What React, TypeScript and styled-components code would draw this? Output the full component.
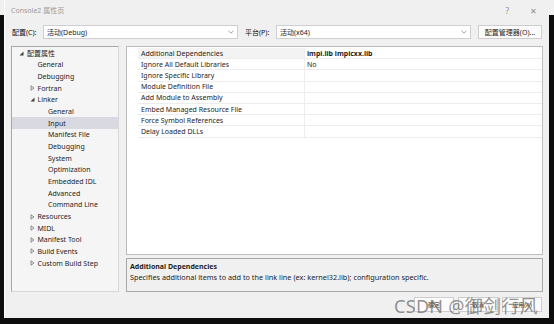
import styled, { createGlobalStyle } from "styled-components";

const GlobalStyle = createGlobalStyle`
  html, body {
    margin: 0;
    padding: 0;
  }
  body {
    width: 554px;
    height: 324px;
    overflow: hidden;
    background: linear-gradient(#f0f0f0 0 15px, #0d0d0d 15px);
    font-family: "Noto Sans", "Noto Sans CJK SC", sans-serif;
    font-size: 7px;
    color: #1e1e1e;
  }
`;

type TreeItem = {
  label: string;
  level: number;
  arrow?: "open" | "closed";
  selected?: boolean;
};

const treeItems: TreeItem[] = [
  { label: "配置属性", level: 0, arrow: "open" },
  { label: "General", level: 1 },
  { label: "Debugging", level: 1 },
  { label: "Fortran", level: 1, arrow: "closed" },
  { label: "Linker", level: 1, arrow: "open" },
  { label: "General", level: 2 },
  { label: "Input", level: 2, selected: true },
  { label: "Manifest File", level: 2 },
  { label: "Debugging", level: 2 },
  { label: "System", level: 2 },
  { label: "Optimization", level: 2 },
  { label: "Embedded IDL", level: 2 },
  { label: "Advanced", level: 2 },
  { label: "Command Line", level: 2 },
  { label: "Resources", level: 1, arrow: "closed" },
  { label: "MIDL", level: 1, arrow: "closed" },
  { label: "Manifest Tool", level: 1, arrow: "closed" },
  { label: "Build Events", level: 1, arrow: "closed" },
  { label: "Custom Build Step", level: 1, arrow: "closed" },
];

const properties: [string, string][] = [
  ["Additional Dependencies", "impi.lib impicxx.lib"],
  ["Ignore All Default Libraries", "No"],
  ["Ignore Specific Library", ""],
  ["Module Definition File", ""],
  ["Add Module to Assembly", ""],
  ["Embed Managed Resource File", ""],
  ["Force Symbol References", ""],
  ["Delay Loaded DLLs", ""],
];

function Chevron() {
  return (
    <svg width="6" height="4" viewBox="0 0 6 4">
      <path d="M0.5 0.8 L3 3.2 L5.5 0.8" fill="none" stroke="#8a8a8a" strokeWidth="0.8" />
    </svg>
  );
}

function Arrow({ kind }: { kind: "open" | "closed" }) {
  if (kind === "open") {
    return (
      <svg width="5" height="5" viewBox="0 0 5 5">
        <path d="M4.5 0.5 L4.5 4.5 L0.5 4.5 Z" fill="#404040" />
      </svg>
    );
  }
  return (
    <svg width="5" height="6" viewBox="0 0 5 6">
      <path d="M1 0.8 L4 3 L1 5.2 Z" fill="none" stroke="#707070" strokeWidth="0.8" />
    </svg>
  );
}

export default function App() {
  return (
    <>
      <GlobalStyle />
      <Dialog>
        <TitleBar>
          <Title>Console2 属性页</Title>
          <TitleButtons>
            <TitleBtn>?</TitleBtn>
            <TitleBtn>✕</TitleBtn>
          </TitleButtons>
        </TitleBar>

        <ConfigRow>
          <Label>配置(C):</Label>
          <Combo $width={195}>
            <span>活动(Debug)</span>
            <Chevron />
          </Combo>
          <Label>平台(P):</Label>
          <Combo $width={195}>
            <span>活动(x64)</span>
            <Chevron />
          </Combo>
          <ManagerButton>配置管理器(O)...</ManagerButton>
        </ConfigRow>

        <Main>
          <Tree>
            {treeItems.map((item, i) => (
              <TreeRow key={i} $level={item.level} $selected={item.selected}>
                <ArrowSlot>{item.arrow && <Arrow kind={item.arrow} />}</ArrowSlot>
                {item.label}
              </TreeRow>
            ))}
          </Tree>

          <RightColumn>
            <Grid>
              {properties.map(([name, value], i) => (
                <GridRow key={name}>
                  <NameCell $active={i === 0}>{name}</NameCell>
                  <ValueCell $bold={i === 0}>{value}</ValueCell>
                </GridRow>
              ))}
            </Grid>
            <Description>
              <DescTitle>Additional Dependencies</DescTitle>
              <div>
                Specifies additional items to add to the link line (ex: kernel32.lib); configuration
                specific.
              </div>
            </Description>
          </RightColumn>
        </Main>

        <Footer>
          <Button>确定</Button>
          <Button>取消</Button>
          <Button>应用(A)</Button>
          <Watermark>CSDN @御剑行风</Watermark>
        </Footer>
      </Dialog>
    </>
  );
}

// Styles
const Dialog = styled.div`
  position: relative;
  width: 544px;
  height: 318px;
  margin-left: 4px;
  border-left: 1px solid #fbfbfb;
  background: #f0f0f0;
  display: flex;
  flex-direction: column;
`;

const TitleBar = styled.div`
  height: 20px;
  display: flex;
  align-items: center;
  justify-content: space-between;
  padding: 0 12px 2px 6px;
`;

const Title = styled.div`
  color: #9a9a9a;
  font-size: 7px;
`;

const TitleButtons = styled.div`
  display: flex;
  gap: 21px;
`;

const TitleBtn = styled.span`
  color: #8c8c8c;
  font-size: 8px;
`;

const ConfigRow = styled.div`
  height: 15px;
  margin-top: 2px;
  display: flex;
  align-items: center;
  padding-left: 7px;
`;

const Label = styled.span`
  width: 31px;
  font-size: 7px;
  color: #111;
  &:nth-of-type(2) {
    margin-left: 7px;
  }
`;

const Combo = styled.div<{ $width: number }>`
  width: ${(p) => p.$width}px;
  height: 14px;
  box-sizing: border-box;
  border: 1px solid #cfcfcf;
  background: #fff;
  display: flex;
  align-items: center;
  justify-content: space-between;
  padding: 0 3px 0 3px;
  font-size: 7px;
`;

const ManagerButton = styled.div`
  width: 64px;
  height: 14px;
  margin-left: 7px;
  box-sizing: border-box;
  border: 1px solid #cdcdcd;
  background: #fbfbfb;
  display: flex;
  align-items: center;
  justify-content: center;
  font-size: 7px;
`;

const Main = styled.div`
  margin-top: 7px;
  height: 246px;
  display: flex;
  gap: 7px;
  padding-left: 6px;
`;

const Tree = styled.div`
  width: 108px;
  box-sizing: border-box;
  border: 1px solid #a9a9a9;
  border-right-color: #d8d8d8;
  border-bottom-color: #d8d8d8;
  background: #f5f5f5;
  padding-top: 0.5px;
  display: flex;
  flex-direction: column;
`;

const TreeRow = styled.div<{ $level: number; $selected?: boolean }>`
  height: 11.67px;
  display: flex;
  align-items: center;
  padding-left: ${(p) => 5 + p.$level * 10.5}px;
  background: ${(p) => (p.$selected ? "#d9d9e2" : "transparent")};
  font-size: 7px;
  color: #1e1e1e;
  white-space: nowrap;
`;

const ArrowSlot = styled.span`
  width: 10px;
  display: inline-flex;
  align-items: center;
  justify-content: flex-start;
  padding-left: 2px;
  box-sizing: border-box;
`;

const RightColumn = styled.div`
  width: 417px;
  display: flex;
  flex-direction: column;
  gap: 3px;
`;

const Grid = styled.div`
  height: 209px;
  box-sizing: border-box;
  border: 1px solid #bdbdbd;
  background: #fff;
  padding: 1px 0 0 11px;
`;

const GridRow = styled.div`
  height: 11.2px;
  display: grid;
  grid-template-columns: 167px 1fr;
  border-bottom: 1px solid #ededed;
  box-sizing: border-box;
`;

const NameCell = styled.div<{ $active?: boolean }>`
  padding-left: 3px;
  display: flex;
  align-items: center;
  background: ${(p) => (p.$active ? "#f3f3f3" : "#fff")};
  border-right: 1px solid #ededed;
  font-size: 7px;
  white-space: nowrap;
`;

const ValueCell = styled.div<{ $bold?: boolean }>`
  padding-left: 2px;
  display: flex;
  align-items: center;
  font-size: 7px;
  font-weight: ${(p) => (p.$bold ? 700 : 400)};
`;

const Description = styled.div`
  height: 34px;
  box-sizing: border-box;
  border: 1px solid #a8a8a8;
  background: #f0f0f0;
  padding: 2px 3px;
  font-size: 7.3px;
  line-height: 11px;
`;

const DescTitle = styled.div`
  font-weight: 700;
  font-size: 7px;
`;

const Footer = styled.div`
  position: relative;
  margin-top: 5px;
  height: 15px;
  display: flex;
  justify-content: flex-end;
  gap: 4px;
  padding-right: 7px;
`;

const Button = styled.div`
  width: 40px;
  box-sizing: border-box;
  border: 1px solid #cdcdcd;
  background: #fbfbfb;
  display: flex;
  align-items: center;
  justify-content: center;
  font-size: 6px;
  color: #333;
`;

const Watermark = styled.div`
  position: absolute;
  right: 11px;
  top: -5px;
  font-size: 18px;
  letter-spacing: 0.3px;
  color: rgba(110, 110, 110, 0.75);
  white-space: nowrap;
  pointer-events: none;
`;
